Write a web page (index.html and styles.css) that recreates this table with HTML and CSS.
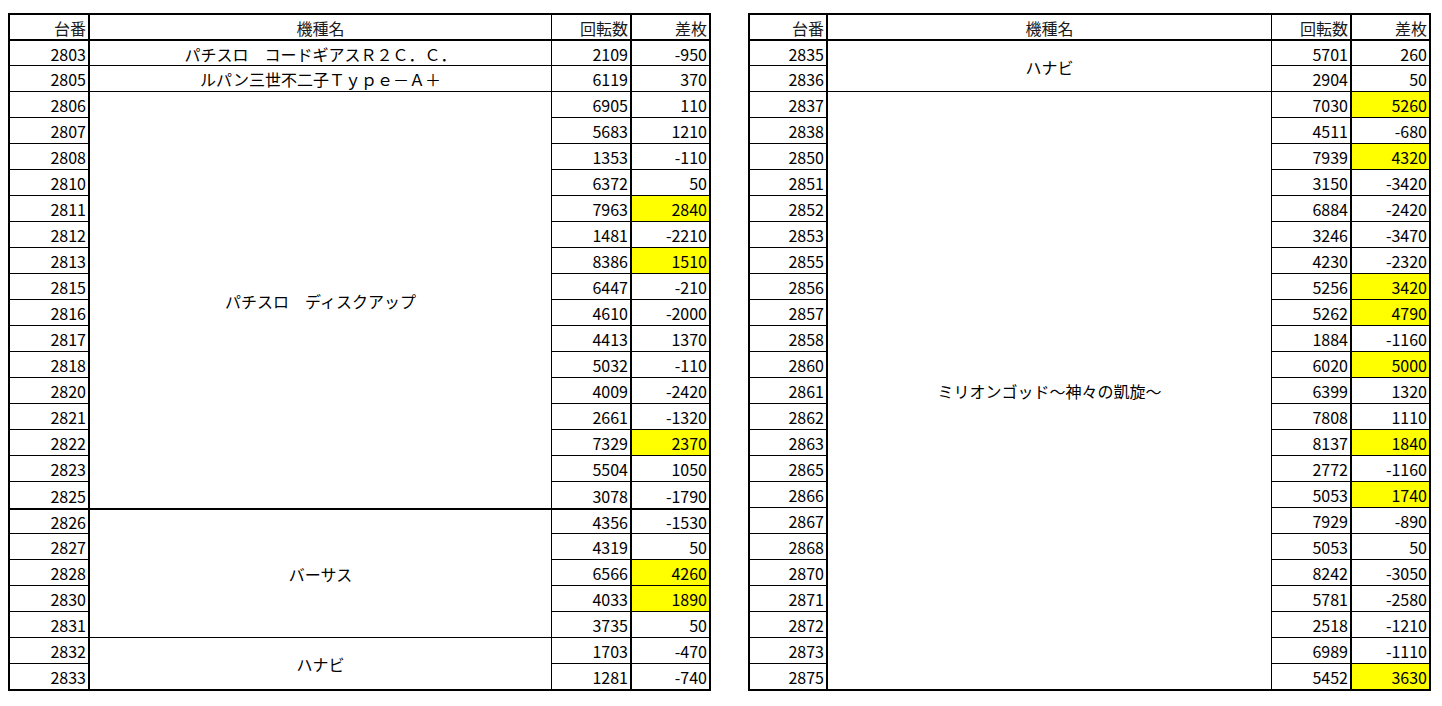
FILE: index.html
```html
<!DOCTYPE html>
<html lang="ja">
<head>
<meta charset="utf-8">
<title>台番一覧</title>
<link rel="stylesheet" href="styles.css">
</head>
<body>
<div class="sheet">
  <div class="tbl tbl-left">
    <div class="c no hd">台番</div><div class="c nm hd ctr">機種名</div><div class="c sp hd">回転数</div><div class="c df hd">差枚</div>
    <div class="c no">2803</div><div class="c nm ctr">パチスロ　コードギアスＲ２Ｃ．Ｃ．</div><div class="c sp">2109</div><div class="c df">-950</div>
    <div class="c no">2805</div><div class="c nm ctr">ルパン三世不二子Ｔｙｐｅ－Ａ＋</div><div class="c sp">6119</div><div class="c df">370</div>
    <div class="c no">2806</div><div class="c nm ctr span16 nb">パチスロ　ディスクアップ</div><div class="c sp">6905</div><div class="c df">110</div>
    <div class="c no">2807</div><div class="c sp">5683</div><div class="c df">1210</div>
    <div class="c no">2808</div><div class="c sp">1353</div><div class="c df">-110</div>
    <div class="c no">2810</div><div class="c sp">6372</div><div class="c df">50</div>
    <div class="c no">2811</div><div class="c sp">7963</div><div class="c df hi">2840</div>
    <div class="c no">2812</div><div class="c sp">1481</div><div class="c df">-2210</div>
    <div class="c no">2813</div><div class="c sp">8386</div><div class="c df hi">1510</div>
    <div class="c no">2815</div><div class="c sp">6447</div><div class="c df">-210</div>
    <div class="c no">2816</div><div class="c sp">4610</div><div class="c df">-2000</div>
    <div class="c no">2817</div><div class="c sp">4413</div><div class="c df">1370</div>
    <div class="c no">2818</div><div class="c sp">5032</div><div class="c df">-110</div>
    <div class="c no">2820</div><div class="c sp">4009</div><div class="c df">-2420</div>
    <div class="c no">2821</div><div class="c sp">2661</div><div class="c df">-1320</div>
    <div class="c no">2822</div><div class="c sp">7329</div><div class="c df hi">2370</div>
    <div class="c no">2823</div><div class="c sp">5504</div><div class="c df">1050</div>
    <div class="c no nb">2825</div><div class="c sp nb">3078</div><div class="c df nb">-1790</div>
    <div class="c no gt">2826</div><div class="c nm ctr span5 gt">バーサス</div><div class="c sp gt">4356</div><div class="c df gt">-1530</div>
    <div class="c no">2827</div><div class="c sp">4319</div><div class="c df">50</div>
    <div class="c no">2828</div><div class="c sp">6566</div><div class="c df hi">4260</div>
    <div class="c no">2830</div><div class="c sp">4033</div><div class="c df hi">1890</div>
    <div class="c no">2831</div><div class="c sp">3735</div><div class="c df">50</div>
    <div class="c no">2832</div><div class="c nm ctr span2">ハナビ</div><div class="c sp">1703</div><div class="c df">-470</div>
    <div class="c no">2833</div><div class="c sp">1281</div><div class="c df">-740</div>
  </div>

  <div class="tbl tbl-right">
    <div class="c no hd">台番</div><div class="c nm hd ctr">機種名</div><div class="c sp hd">回転数</div><div class="c df hd">差枚</div>
    <div class="c no">2835</div><div class="c nm ctr span2">ハナビ</div><div class="c sp">5701</div><div class="c df">260</div>
    <div class="c no">2836</div><div class="c sp">2904</div><div class="c df">50</div>
    <div class="c no">2837</div><div class="c nm ctr span23">ミリオンゴッド～神々の凱旋～</div><div class="c sp">7030</div><div class="c df hi">5260</div>
    <div class="c no">2838</div><div class="c sp">4511</div><div class="c df">-680</div>
    <div class="c no">2850</div><div class="c sp">7939</div><div class="c df hi">4320</div>
    <div class="c no">2851</div><div class="c sp">3150</div><div class="c df">-3420</div>
    <div class="c no">2852</div><div class="c sp">6884</div><div class="c df">-2420</div>
    <div class="c no">2853</div><div class="c sp">3246</div><div class="c df">-3470</div>
    <div class="c no">2855</div><div class="c sp">4230</div><div class="c df">-2320</div>
    <div class="c no">2856</div><div class="c sp">5256</div><div class="c df hi">3420</div>
    <div class="c no">2857</div><div class="c sp">5262</div><div class="c df hi">4790</div>
    <div class="c no">2858</div><div class="c sp">1884</div><div class="c df">-1160</div>
    <div class="c no">2860</div><div class="c sp">6020</div><div class="c df hi">5000</div>
    <div class="c no">2861</div><div class="c sp">6399</div><div class="c df">1320</div>
    <div class="c no">2862</div><div class="c sp">7808</div><div class="c df">1110</div>
    <div class="c no">2863</div><div class="c sp">8137</div><div class="c df hi">1840</div>
    <div class="c no">2865</div><div class="c sp">2772</div><div class="c df">-1160</div>
    <div class="c no">2866</div><div class="c sp">5053</div><div class="c df hi">1740</div>
    <div class="c no">2867</div><div class="c sp">7929</div><div class="c df">-890</div>
    <div class="c no">2868</div><div class="c sp">5053</div><div class="c df">50</div>
    <div class="c no">2870</div><div class="c sp">8242</div><div class="c df">-3050</div>
    <div class="c no">2871</div><div class="c sp">5781</div><div class="c df">-2580</div>
    <div class="c no">2872</div><div class="c sp">2518</div><div class="c df">-1210</div>
    <div class="c no">2873</div><div class="c sp">6989</div><div class="c df">-1110</div>
    <div class="c no">2875</div><div class="c sp">5452</div><div class="c df hi">3630</div>
  </div>
</div>
</body>
</html>
```

FILE: styles.css
```css
html, body {
  margin: 0;
  padding: 0;
  background: #ffffff;
}

body {
  font-family: "Noto Sans CJK JP", "Noto Sans", sans-serif;
  font-size: 16px;
  color: #000000;
}

.sheet {
  display: flex;
  align-items: flex-start;
  gap: 37px;
  padding: 13px 0 0 8px;
}

.tbl {
  display: grid;
  grid-template-rows: 26px 25px;
  grid-auto-rows: 26px;
  border-left: 2px solid #000;
  border-top: 2px solid #000;
  border-bottom: 1px solid #000;
}

.tbl-left {
  grid-template-columns: 80px 462px 80px 79px;
}

.tbl-right {
  grid-template-columns: 78px 444px 80px 79px;
}

.c {
  box-sizing: border-box;
  display: flex;
  align-items: center;
  justify-content: flex-end;
  padding: 1px 2px 0 0;
  border-right: 1px solid #000;
  border-bottom: 1px solid #000;
  line-height: 1;
  white-space: nowrap;
  overflow: hidden;
}

.no,
.sp,
.df {
  border-right-width: 2px;
}

.hd {
  border-bottom-width: 2px;
  color: #1a1a1a;
}

.ctr {
  justify-content: center;
  padding-right: 0;
}

.nb {
  border-bottom: 0;
}

.gt {
  border-top: 2px solid #000;
}

.hi {
  background: #ffff00;
}

.span2 { grid-row: span 2; }
.span5 { grid-row: span 5; }
.span16 { grid-row: span 16; }
.span23 { grid-row: span 23; }
```
